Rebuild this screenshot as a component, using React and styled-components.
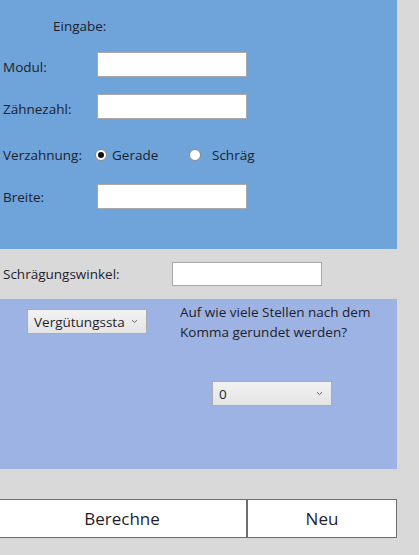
import React from "react";
import styled, { createGlobalStyle } from "styled-components";

const Global = createGlobalStyle`
  html, body { margin: 0; padding: 0; background: #d9d9d9; }
  body { font-family: "Open Sans", "Noto Sans", sans-serif; font-size: 13.5px; color: #1e1e2c; }
  * { box-sizing: border-box; }
`;

const Page = styled.div`
  width: 419px;
  height: 555px;
  background: #d9d9d9;
  overflow: hidden;
`;

const InputPanel = styled.section`
  width: 397px;
  height: 249px;
  background: #6ea4da;
  display: flex;
  flex-direction: column;
  padding-left: 3px;
`;

const Title = styled.div`
  height: 52px;
  display: flex;
  align-items: center;
  padding-left: 50px;
`;

const Row = styled.div`
  display: flex;
  align-items: center;
  height: ${(p) => p.$h || 25}px;
  margin-top: ${(p) => p.$mt || 0}px;
`;

const Label = styled.span`
  width: ${(p) => p.$w || 94}px;
  flex: none;
  padding-top: ${(p) => p.$pt || 0}px;
  white-space: nowrap;
`;

const TextBox = styled.input.attrs({ type: "text" })`
  width: 150px;
  height: ${(p) => p.$h || 25}px;
  border: 1px solid #a8a8a8;
  background: #fff;
  outline: none;
  padding: 0 4px;
  font: inherit;
`;

const RadioGroup = styled.label`
  display: flex;
  align-items: center;
  width: ${(p) => p.$w}px;
  flex: none;
  white-space: nowrap;
`;

const RadioDot = styled.span`
  flex: none;
  width: 12px;
  height: 12px;
  border-radius: 50%;
  background: #fff;
  border: 1px solid #8a8a8a;
  display: flex;
  align-items: center;
  justify-content: center;
  margin-right: ${(p) => p.$gap}px;
  &::after {
    content: "";
    width: 6px;
    height: 6px;
    border-radius: 50%;
    background: ${(p) => (p.$checked ? "#111" : "transparent")};
  }
`;

const AngleRow = styled.div`
  height: 50px;
  width: 397px;
  display: flex;
  align-items: center;
  padding-left: 3px;
`;

const OptionsPanel = styled.section`
  width: 397px;
  height: 170px;
  background: #9db3e3;
  display: grid;
  grid-template-columns: 180px 1fr;
`;

const LeftCol = styled.div`
  padding: 10px 0 0 27px;
`;

const RightCol = styled.div`
  display: flex;
  flex-direction: column;
  padding-top: 3px;
`;

const Question = styled.p`
  margin: 0;
  line-height: 20px;
  width: 210px;
`;

const Select = styled.div`
  width: 120px;
  height: 25px;
  border: 1px solid #acacac;
  background: linear-gradient(#f2f2f2, #e4e4e4);
  display: flex;
  align-items: center;
  padding: 0 6px 0 6px;
  margin-left: ${(p) => p.$ml || 0}px;
  margin-top: ${(p) => p.$mt || 0}px;
`;

const SelectText = styled.span`
  flex: 1;
  overflow: hidden;
  white-space: nowrap;
`;

const Chevron = styled.svg`
  flex: none;
  width: 7px;
  height: 5px;
  margin-left: 4px;
  margin-right: 2px;
`;

const ButtonBar = styled.div`
  display: flex;
  margin-top: 30px;
  margin-left: -3px;
`;

const Button = styled.button`
  width: ${(p) => p.$w}px;
  height: 39px;
  background: #fff;
  border: 1px solid #6e6e6e;
  font-family: "Open Sans", "Noto Sans", sans-serif;
  font-size: 17px;
  color: #1e1e2c;
  padding: 0;
  cursor: pointer;
`;

const Arrow = () => (
  <Chevron viewBox="0 0 7 5">
    <path d="M1 1.2 L3.5 3.6 L6 1.2" fill="none" stroke="#666" strokeWidth="1" />
  </Chevron>
);

export default function App() {
  return (
    <Page>
      <Global />
      <InputPanel>
        <Title>Eingabe:</Title>
        <Row>
          <Label $pt={4}>Modul:</Label>
          <TextBox />
        </Row>
        <Row $mt={17}>
          <Label $pt={4}>Zähnezahl:</Label>
          <TextBox />
        </Row>
        <Row $mt={24} $h={24}>
          <Label $w={92}>Verzahnung:</Label>
          <RadioGroup $w={94}>
            <RadioDot $checked $gap={5} />
            Gerade
          </RadioGroup>
          <RadioGroup $w={60}>
            <RadioDot $gap={11} />
            Schräg
          </RadioGroup>
        </Row>
        <Row $mt={17}>
          <Label $pt={-2}>Breite:</Label>
          <TextBox />
        </Row>
      </InputPanel>
      <AngleRow>
        <Label $w={169}>Schrägungswinkel:</Label>
        <TextBox $h={24} />
      </AngleRow>
      <OptionsPanel>
        <LeftCol>
          <Select>
            <SelectText>Vergütungssta</SelectText>
            <Arrow />
          </Select>
        </LeftCol>
        <RightCol>
          <Question>Auf wie viele Stellen nach dem Komma gerundet werden?</Question>
          <Select $ml={32} $mt={39}>
            <SelectText>0</SelectText>
            <Arrow />
          </Select>
        </RightCol>
      </OptionsPanel>
      <ButtonBar>
        <Button $w={250}>Berechne</Button>
        <Button $w={150}>Neu</Button>
      </ButtonBar>
    </Page>
  );
}
